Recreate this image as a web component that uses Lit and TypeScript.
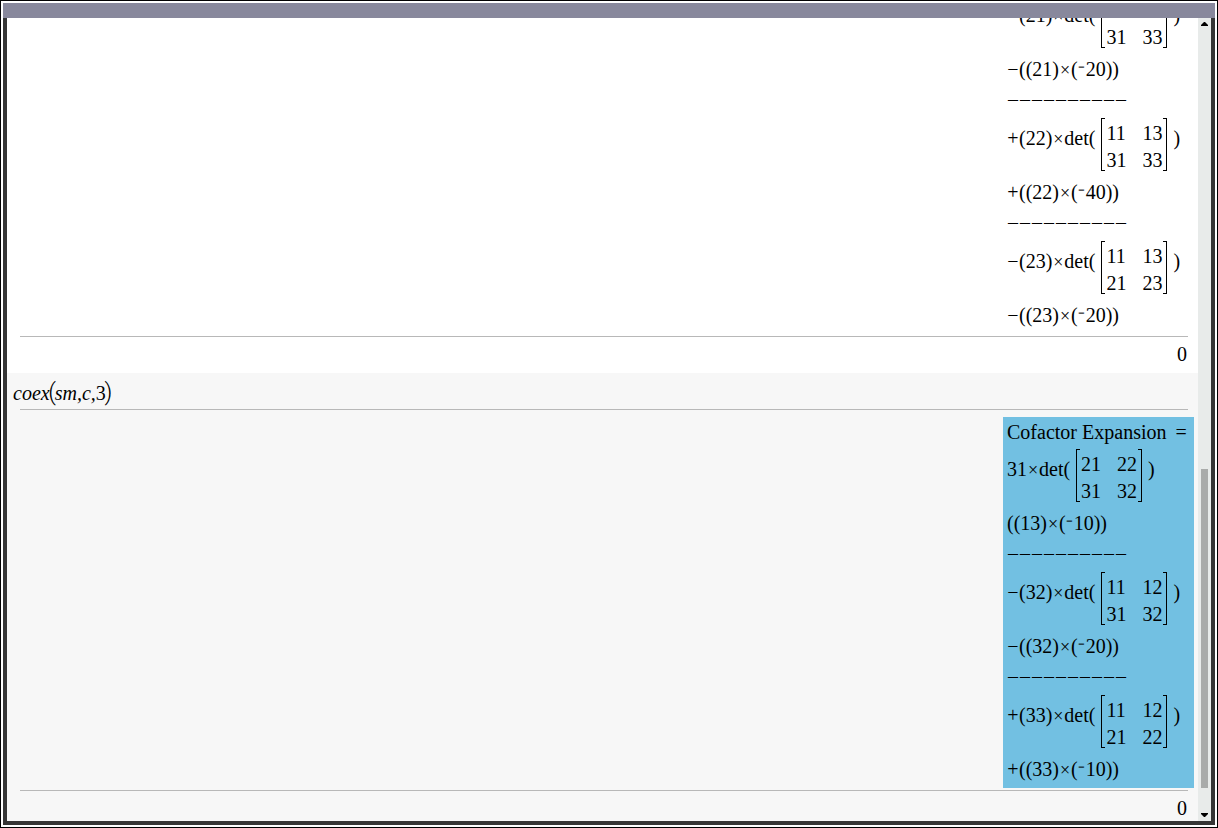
import { LitElement, html, css } from "lit";
import { customElement, property } from "lit/decorators.js";
import { classMap } from "lit/directives/class-map.js";

type Line =
  | { kind: "text"; value: string }
  | { kind: "dashes" }
  | { kind: "det"; lead: string; cells: number[] };

interface Entry {
  input?: string;
  lines: Line[];
  result: string;
  selected: boolean;
}

const text = (value: string): Line => ({ kind: "text", value });
const det = (lead: string, ...cells: number[]): Line => ({ kind: "det", lead, cells });
const dashes: Line = { kind: "dashes" };

const ENTRIES: Entry[] = [
  {
    lines: [
      det("−(21)×", 11, 13, 31, 33),
      text("−((21)×(⁻20))"),
      dashes,
      det("+(22)×", 11, 13, 31, 33),
      text("+((22)×(⁻40))"),
      dashes,
      det("−(23)×", 11, 13, 21, 23),
      text("−((23)×(⁻20))"),
    ],
    result: "0",
    selected: false,
  },
  {
    input: "coex(sm,c,3)",
    lines: [
      text("Cofactor Expansion ="),
      det("31×", 21, 22, 31, 32),
      text("((13)×(⁻10))"),
      dashes,
      det("−(32)×", 11, 12, 31, 32),
      text("−((32)×(⁻20))"),
      dashes,
      det("+(33)×", 11, 12, 21, 22),
      text("+((33)×(⁻10))"),
    ],
    result: "0",
    selected: true,
  },
];

@customElement("math-line")
class MathLine extends LitElement {
  @property({ attribute: false }) line!: Line;

  static styles = css`
    :host { display: block; line-height: 27px; white-space: pre; }
    .op, .times, .neg { display: inline-block; text-align: center; }
    .op { width: 12px; }
    .times { width: 12px; font-size: 18px; line-height: 20px; }
    .neg { width: 8px; line-height: 20px; vertical-align: -3px; }
    .equals { padding-left: 4px; }
    .dashes { display: flex; gap: 2px; padding: 0 0 2px 1px; line-height: 25px; }
    .det { display: flex; align-items: flex-start; }
    .side { padding-top: 7px; margin-bottom: -7px; }
    .matrix {
      position: relative;
      display: grid;
      grid-template-columns: auto auto;
      gap: 3px 16px;
      margin: 0 6px;
      padding: 3px 5px 0;
      line-height: 24px;
      margin-bottom: -1px;
    }
    .matrix::before, .matrix::after {
      content: "";
      position: absolute;
      top: 0;
      bottom: 1px;
      width: 3px;
      border: 1px solid #000;
    }
    .matrix::before { left: 0; border-right: 0; }
    .matrix::after { right: 0; border-left: 0; }
  `;

  private symbols(value: string) {
    return [...value].map((ch) => {
      if (ch === "×") return html`<span class="times">×</span>`;
      if (ch === "⁻") return html`<span class="neg">⁻</span>`;
      if (ch === "=") return html`<span class="equals">=</span>`;
      if (ch === "−" || ch === "+") return html`<span class="op">${ch}</span>`;
      return ch;
    });
  }

  render() {
    const line = this.line;
    if (line.kind === "dashes") {
      return html`<div class="dashes">${Array.from({ length: 10 }, () => html`<span>–</span>`)}</div>`;
    }
    if (line.kind === "text") return html`${this.symbols(line.value)}`;
    return html`<div class="det"><span class="side">${this.symbols(line.lead)}det(</span><div class="matrix">${line.cells.map((n) => html`<span>${n}</span>`)}</div><span class="side">)</span></div>`;
  }
}

@customElement("history-entry")
class HistoryEntry extends LitElement {
  @property({ attribute: false }) entry!: Entry;

  static styles = css`
    :host { display: block; }
    .entry { display: flex; flex-direction: column; line-height: 27px; }
    .shaded { background: #f7f7f7; }
    .input { display: flex; padding: 7px 6px 2px; font-style: italic; }
    .upright { font-style: normal; }
    .fence {
      display: flex;
      justify-content: center;
      width: 5px;
      font: 300 24px/25px Roboto, sans-serif;
    }
    .rule { height: 1px; margin: 0 10px 0 13px; background: #b8b8b8; }
    .output {
      display: flex;
      flex-direction: column;
      gap: 4px;
      align-self: flex-end;
      box-sizing: border-box;
      min-width: 191px;
      margin: 7px 4px 2px 0;
      padding: 2px 4px 5px;
    }
    .selected { background: #72c0e2; }
    math-line.spaced { padding-bottom: 4px; }
    math-line.heading { margin-bottom: -1px; }
    .result { padding: 5px 11px 6px; line-height: 25px; text-align: right; }
    .shaded .result { padding-bottom: 0; }
  `;

  private input(value: string) {
    return [...value].map((ch) => {
      if (ch === "(" || ch === ")") return html`<span class="fence">${ch}</span>`;
      if (/\d/.test(ch)) return html`<span class="upright">${ch}</span>`;
      return html`<span>${ch}</span>`;
    });
  }

  render() {
    const { input, lines, result, selected } = this.entry;
    return html`
      <section class=${classMap({ entry: true, shaded: selected })}>
        ${input ? html`<div class="input">${this.input(input)}</div><div class="rule"></div>` : ""}
        <div class=${classMap({ output: true, selected })}>
          ${lines.map(
            (line, i) => html`<math-line
              class=${classMap({ spaced: line.kind === "det", heading: i === 0 && line.kind === "text" })}
              .line=${line}
            ></math-line>`
          )}
        </div>
        <div class="rule"></div>
        <div class="result">${result}</div>
      </section>
    `;
  }
}

@customElement("app-root")
class AppRoot extends LitElement {
  static styles = css`
    :host {
      display: flex;
      flex-direction: column;
      box-sizing: border-box;
      height: 100vh;
      padding: 2px;
      border: 1px solid #000;
      background: #fff;
      color: #000;
      font: 20px/27px "Liberation Serif", serif;
    }
    .title { flex: none; height: 15px; background: #88889c; }
    .frame {
      flex: 1;
      min-height: 0;
      display: flex;
      border: 4px solid #363636;
      border-top: 0;
    }
    .history {
      flex: 1;
      display: flex;
      flex-direction: column;
      justify-content: flex-end;
      overflow: hidden;
    }
    history-entry { flex: none; }
    .scrollbar {
      flex: none;
      width: 13px;
      display: flex;
      flex-direction: column;
      background: #e8ebea;
    }
    .arrow {
      flex: none;
      display: flex;
      justify-content: center;
      align-items: center;
      height: 12px;
      margin: 0;
      padding: 0;
      border: 0;
      background: none;
    }
    .arrow svg { display: block; }
    .track { flex: 1; display: grid; padding: 0 3px; }
    .thumb { grid-row: 2; background: #a9abaa; }
  `;

  render() {
    const rows = { before: 439, thumb: 319, after: 21 };
    return html`
      <header class="title"></header>
      <main class="frame">
        <div class="history">
          ${ENTRIES.map((entry) => html`<history-entry .entry=${entry}></history-entry>`)}
        </div>
        <div class="scrollbar">
          <button class="arrow" aria-label="Scroll up">
            <svg width="7" height="4" viewBox="0 0 7 4"><path d="M3 0h1L7 3v1H0V3z" /></svg>
          </button>
          <div class="track" style="grid-template-rows: ${rows.before}fr ${rows.thumb}fr ${rows.after}fr">
            <div class="thumb"></div>
          </div>
          <button class="arrow" aria-label="Scroll down">
            <svg width="7" height="4" viewBox="0 0 7 4"><path d="M0 0h7v1L4 4H3L0 1z" /></svg>
          </button>
        </div>
      </main>
    `;
  }
}
